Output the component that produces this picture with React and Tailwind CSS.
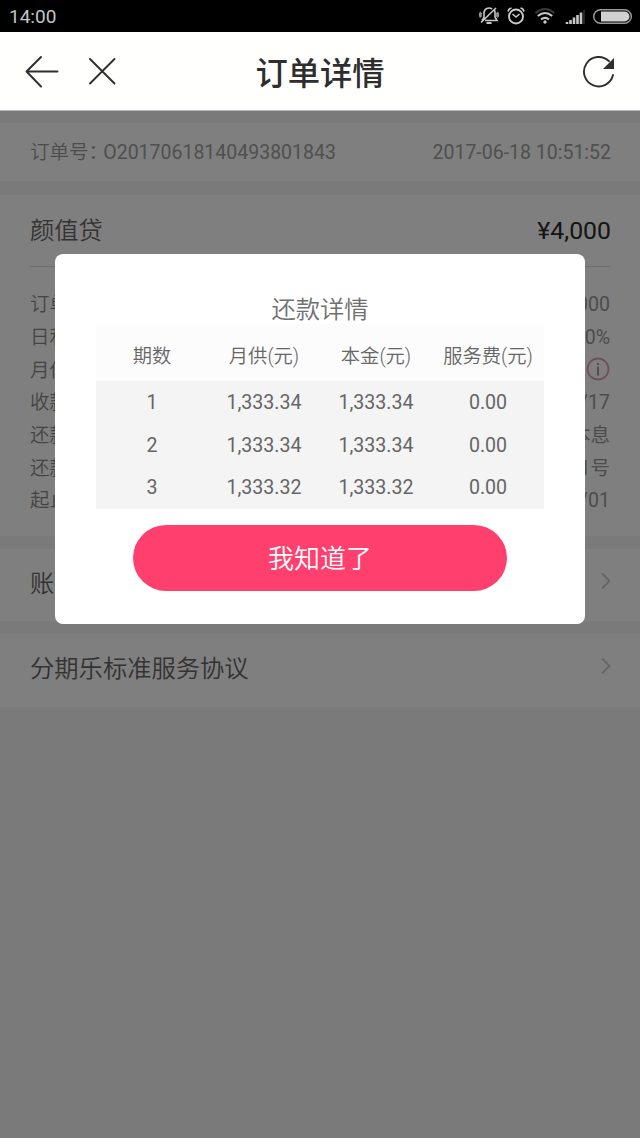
import clsx from 'clsx';

const details = [
    { label: '订单金额', value: '¥4,000' },
    { label: '日利率', value: '0.00%' },
    { label: '月供', value: '', info: true },
    { label: '收款日', value: '06/17' },
    { label: '还款方式', value: '本息' },
    { label: '还款日', value: '1号' },
    { label: '起止日', value: '08/01' },
];

const plan = [
    ['1', '1,333.34', '1,333.34', '0.00'],
    ['2', '1,333.34', '1,333.34', '0.00'],
    ['3', '1,333.32', '1,333.32', '0.00'],
];

function StatusBar() {
    return (
        <div className="flex h-8 shrink-0 items-center justify-between bg-black pl-[9px] pr-[7px] text-[#c4c4c4]">
            <span className="pt-px text-[19px] leading-8">14:00</span>
            <svg width="156" height="22" viewBox="477 5 156 22" fill="none" stroke="#c8c8c8" strokeWidth="1.6">
                {/* muted bell */}
                <path d="M485 20.500h12l-2-3.500v-4.500q0-1.500-.8-2.500M492 9a5 5 0 0 0-8 4v4.500l-2 3M481 22.500L496 8" />
                <path d="M486.500 23h5" strokeWidth="2" />
                <path d="M481.300 12.500a3.500 3.500 0 0 0-.2 4.600M496.700 12.500a3.500 3.500 0 0 1 .2 4.600" strokeWidth="2.800" stroke="#909090" />
                {/* alarm */}
                <circle cx="516" cy="16.500" r="7" strokeWidth="1.900" />
                <path d="M512.500 14l3.500 3 3.500-3" />
                <path d="M508 11.500q.5-3 3.500-3.500M524 11.500q-.5-3-3.500-3.500" />
                {/* wifi */}
                <path d="M535.500 13q9.500-8 19 0" stroke="#383838" strokeWidth="2" />
                <path d="M537.800 16q7.200-6 14.400 0M541 19.500q4-3.400 8 0" strokeWidth="2.100" />
                <circle cx="545" cy="22" r="1.700" fill="#c8c8c8" stroke="none" />
                {/* signal */}
                <path d="M567 24v-2M570.500 24v-4M574 24v-6.500M577.500 24v-9M581 24v-11.500" strokeWidth="2.600" />
                <path d="M584 24v-14" stroke="#333" strokeWidth="1.500" />
                {/* battery */}
                <rect x="593.700" y="9.700" width="37.600" height="13.600" rx="6.800" strokeWidth="1.500" stroke="#999" />
                <path d="M601 11.500h23.500a5 5 0 0 1 0 10H601z" fill="#d0d0d0" stroke="none" />
            </svg>
        </div>
    );
}

function Header() {
    return (
        <header className="flex h-[79px] shrink-0 items-center justify-between border-b border-[#b6b8c0] bg-[#fffffd] pl-[25px] pr-6 text-[#2e2e30]">
            <svg width="92" height="34" viewBox="25 54 92 34" fill="none" stroke="currentColor" strokeWidth="1.900" strokeLinecap="round" strokeLinejoin="round">
                <path d="M57.500 71.500H26.500M41 57L26.500 71.500 41 86.500" />
                <path d="M90 59l24.500 24.500M114.500 59L90 83.500" />
            </svg>
            <h1 className="mr-[59px] pt-1.5 text-[32.3px] font-medium leading-none">订单详情</h1>
            <svg width="34" height="34" viewBox="582 54 34 34" fill="none" stroke="currentColor" strokeWidth="1.900" strokeLinecap="round">
                <path d="M613 75A14.700 14.700 0 1 1 609 61.200" />
                <path d="M614 58v11h-11z" fill="currentColor" stroke="none" />
            </svg>
        </header>
    );
}

function Chevron() {
    return (
        <svg className="mb-[9px]" width="12" height="18" viewBox="0 0 12 18" fill="none" stroke="#cacaca" strokeWidth="1.800">
            <path d="M2 1.500L9.500 9 2 16.500" />
        </svg>
    );
}

function LinkRow({ title, className }) {
    return (
        <div className={clsx('flex items-center justify-between bg-white pl-[30px] pr-[28px] text-[24.300px] font-[350] text-[#666]', className)}>
            <span className="pb-0.5 leading-none">{title}</span>
            <Chevron />
        </div>
    );
}

function RepaymentDialog() {
    return (
        <div className="flex h-[370px] w-[530px] flex-col items-center rounded-lg bg-white text-[#666]">
            <h2 className="h-[70px] pt-10 text-[24.300px] font-[350] leading-[31px] text-[#707070]">还款详情</h2>
            <div className="w-[448px] bg-[#f4f4f4]">
                <div className="grid h-[57px] grid-cols-4 items-center bg-[#fcfcfc] pt-2.5 text-center text-[19.300px] font-[350]">
                    <span>期数</span>
                    <span>月供(元)</span>
                    <span>本金(元)</span>
                    <span>服务费(元)</span>
                </div>
                {plan.map((row) => (
                    <div key={row[0]} className="grid h-[42.600px] grid-cols-4 items-center text-center text-[19.600px]">
                        {row.map((cell, i) => (
                            <span key={i} className="pt-px">{cell}</span>
                        ))}
                    </div>
                ))}
            </div>
            <button className="mt-4 h-[66px] w-[374px] rounded-full bg-[#ff406f] pt-[3px] text-[26px] leading-none font-[350] text-white">
                我知道了
            </button>
        </div>
    );
}

export default function App() {
    return (
        <div lang="zh-CN" className="flex h-[1138px] w-[640px] flex-col overflow-hidden bg-[#f4f4f4] font-[Roboto,'Noto_Sans_CJK_SC',sans-serif]">
            <StatusBar />
            <Header />
            <main className="relative flex-1">
                <div className="mt-3 flex h-[58px] items-center justify-between bg-white pl-[30px] pr-[29px] pt-px text-[19.500px] text-[#a0a0a0]">
                    <span><span className="font-[350] text-[#999]">订单号</span><span className="mr-[5px] [font-feature-settings:'halt']">：</span>O20170618140493801843</span>
                    <span>2017-06-18 10:51:52</span>
                </div>

                <section className="mt-[14px] h-[341px] bg-white px-[29px]">
                    <div className="flex h-[72px] items-center justify-between border-b border-[#dcdcdc] px-px text-[24.300px]">
                        <span className="pt-0.5 font-[350] text-[#666]">颜值贷</span>
                        <span className="-mr-px text-[24.800px] text-[#2a2a2a]">¥4,000</span>
                    </div>
                    <div className="px-px pt-[21.500px] text-[19.500px] text-[#999]">
                        {details.map((item) => (
                            <div key={item.label} className="flex h-[32.700px] items-center justify-between">
                                <span className="font-[350] text-[#888]">{item.label}</span>
                                <span className="flex items-center gap-2">
                                    {item.value}
                                    {item.info && (
                                        <svg className="mb-0.5" width="24" height="24" viewBox="0 0 24 24" fill="none" stroke="#e0a0b0" strokeWidth="1.800">
                                            <circle cx="12" cy="12" r="10.500" />
                                            <path d="M12 6v2M12 9.500v9" stroke="#ad8590" />
                                        </svg>
                                    )}
                                </span>
                            </div>
                        ))}
                    </div>
                </section>

                <LinkRow title="账单" className="mt-[13px] h-[72px]" />
                <LinkRow title="分期乐标准服务协议" className="mt-[13px] h-[73px]" />

                {/* mask and dialog */}
                <div className="absolute inset-0 flex items-start justify-center bg-black/50 pt-[143px]">
                    <RepaymentDialog />
                </div>
            </main>
        </div>
    );
}
